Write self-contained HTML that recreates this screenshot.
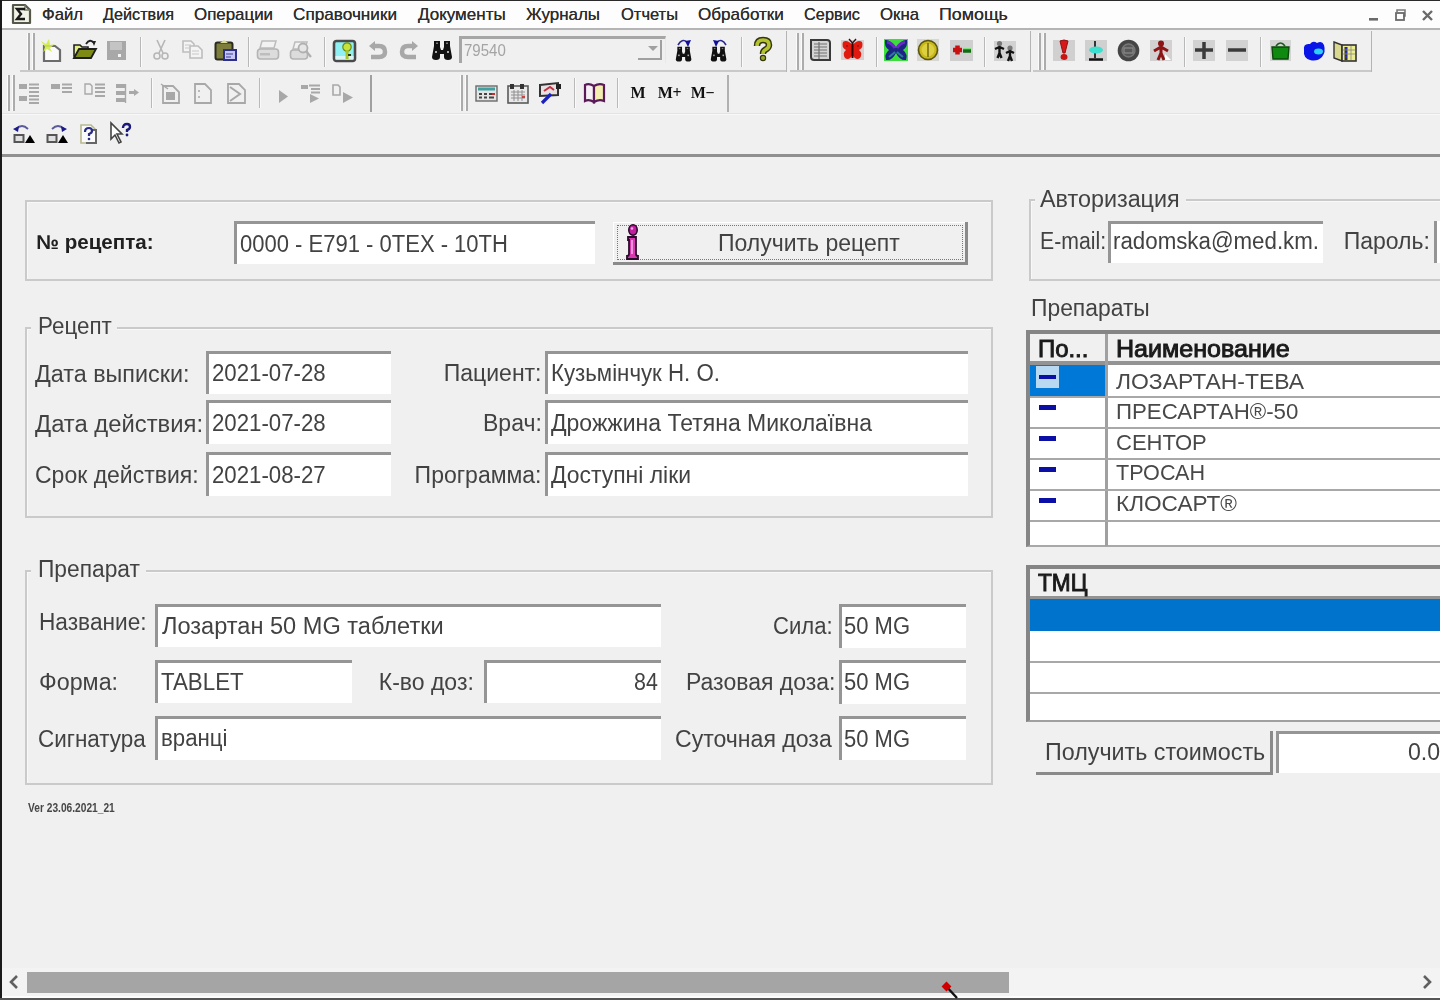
<!DOCTYPE html>
<html><head><meta charset="utf-8"><style>
*{margin:0;padding:0;box-sizing:border-box}
html,body{width:1440px;height:1000px;overflow:hidden;background:#f0f0f0;font-family:"Liberation Sans",sans-serif}
.t{position:absolute;white-space:nowrap;line-height:normal;transform-origin:0 0}
.b{position:absolute}
.inp{position:absolute;background:#fff;border-top:3px solid #959595;border-left:3px solid #959595}
.grp{position:absolute;border:2px solid #cacaca;box-shadow:inset 1px 1px 0 #f8f8f8}
svg{position:absolute;overflow:visible}
#w{position:absolute;left:0;top:0;width:1440px;height:1000px;filter:blur(0.45px)}
.mn{text-shadow:0 0 0.6px #333}
</style></head><body>
<div id="w">
<div class="b" style="left:0px;top:0px;width:1440px;height:1px;background:#2a2a2a"></div>
<div class="b" style="left:0px;top:0px;width:2px;height:1000px;background:#1a1a1a"></div>
<div class="b" style="left:2px;top:1px;width:1438px;height:27px;background:#fdfdfd"></div>
<div class="b" style="left:2px;top:28px;width:1438px;height:2px;background:#b4b4b4"></div>
<div class="t mn" style="left:42.00px;top:5.12px;font-size:17px;color:#2e2e2e;transform:scaleX(0.9820);">Файл</div>
<div class="t mn" style="left:103.00px;top:5.12px;font-size:17px;color:#2e2e2e;transform:scaleX(0.9530);">Действия</div>
<div class="t mn" style="left:194.00px;top:5.12px;font-size:17px;color:#2e2e2e;transform:scaleX(0.9937);">Операции</div>
<div class="t mn" style="left:293.00px;top:5.12px;font-size:17px;color:#2e2e2e;transform:scaleX(1.0097);">Справочники</div>
<div class="t mn" style="left:418.00px;top:5.12px;font-size:17px;color:#2e2e2e;">Документы</div>
<div class="t mn" style="left:526.00px;top:5.12px;font-size:17px;color:#2e2e2e;transform:scaleX(0.9966);">Журналы</div>
<div class="t mn" style="left:621.00px;top:5.12px;font-size:17px;color:#2e2e2e;transform:scaleX(0.9702);">Отчеты</div>
<div class="t mn" style="left:698.00px;top:5.12px;font-size:17px;color:#2e2e2e;transform:scaleX(1.0058);">Обработки</div>
<div class="t mn" style="left:804.00px;top:5.12px;font-size:17px;color:#2e2e2e;transform:scaleX(0.9614);">Сервис</div>
<div class="t mn" style="left:880.00px;top:5.12px;font-size:17px;color:#2e2e2e;transform:scaleX(0.9873);">Окна</div>
<div class="t mn" style="left:939.00px;top:5.12px;font-size:17px;color:#2e2e2e;transform:scaleX(1.0494);">Помощь</div>
<div class="b" style="left:2px;top:113px;width:1438px;height:1px;background:#e3e3e3"></div>
<div class="b" style="left:2px;top:114px;width:1438px;height:1px;background:#f8f8f8"></div>
<div class="b" style="left:2px;top:154px;width:1438px;height:3px;background:#909090"></div>
<div class="grp" style="left:25px;top:200px;width:968px;height:81px"></div>
<div class="grp" style="left:25px;top:327px;width:968px;height:191px"></div>
<div class="b" style="left:31px;top:318px;width:86px;height:14px;background:#f0f0f0"></div>
<div class="grp" style="left:25px;top:570px;width:968px;height:215px"></div>
<div class="b" style="left:31px;top:560px;width:115px;height:16px;background:#f0f0f0"></div>
<div class="grp" style="left:1029px;top:199px;width:420px;height:82px"></div>
<div class="b" style="left:1035px;top:190px;width:151px;height:15px;background:#f0f0f0"></div>
<div class="inp" style="left:234px;top:221px;width:361px;height:43px"></div>
<div class="inp" style="left:206px;top:351px;width:185px;height:43px"></div>
<div class="inp" style="left:545px;top:351px;width:423px;height:43px"></div>
<div class="inp" style="left:206px;top:400px;width:185px;height:44px"></div>
<div class="inp" style="left:545px;top:400px;width:423px;height:44px"></div>
<div class="inp" style="left:206px;top:452px;width:185px;height:44px"></div>
<div class="inp" style="left:545px;top:452px;width:423px;height:44px"></div>
<div class="inp" style="left:155px;top:604px;width:506px;height:43px"></div>
<div class="inp" style="left:155px;top:660px;width:197px;height:43px"></div>
<div class="inp" style="left:484px;top:660px;width:177px;height:43px"></div>
<div class="inp" style="left:155px;top:716px;width:506px;height:44px"></div>
<div class="inp" style="left:839px;top:604px;width:127px;height:44px"></div>
<div class="inp" style="left:839px;top:660px;width:127px;height:44px"></div>
<div class="inp" style="left:839px;top:716px;width:127px;height:44px"></div>
<div class="inp" style="left:1108px;top:221px;width:215px;height:42px"></div>
<div class="b" style="left:1434px;top:221px;width:6px;height:42px;background:#fff;border-left:3px solid #959595"></div>
<div class="inp" style="left:1276px;top:731px;width:164px;height:42px"></div>
<div class="b" style="left:613px;top:222px;width:355px;height:43px;background:#f0f0f0;border-right:3px solid #8a8a8a;border-bottom:3px solid #8a8a8a;box-shadow:inset 1px 1px 0 #fff"></div>
<div class="b" style="left:617px;top:225px;width:346px;height:35px;border:1px dotted #777"></div>
<div class="b" style="left:1036px;top:731px;width:237px;height:44px;background:#f0f0f0;border-right:3px solid #8a8a8a;border-bottom:3px solid #8a8a8a"></div>
<div class="t" style="left:36.00px;top:231.40px;font-size:20px;color:#202020;font-weight:bold;transform:scaleX(1.0284);">№ рецепта:</div>
<div class="t" style="left:239.50px;top:230.59px;font-size:23px;color:#424242;transform:scaleX(0.9571);">0000 - E791 - 0TEX - 10TH</div>
<div class="t" style="left:718.00px;top:230.19px;font-size:23px;color:#424242;">Получить рецепт</div>
<div class="t" style="left:38.00px;top:313.19px;font-size:23px;color:#424242;transform:scaleX(0.9729);">Рецепт</div>
<div class="t" style="left:35.00px;top:360.88px;font-size:23px;color:#424242;transform:scaleX(1.0148);">Дата выписки:</div>
<div class="t" style="left:35.00px;top:410.88px;font-size:23px;color:#424242;transform:scaleX(1.0354);">Дата действия:</div>
<div class="t" style="left:35.00px;top:462.19px;font-size:23px;color:#424242;">Срок действия:</div>
<div class="t" style="left:211.70px;top:360.38px;font-size:23px;color:#424242;transform:scaleX(0.9665);">2021-07-28</div>
<div class="t" style="left:211.70px;top:410.38px;font-size:23px;color:#424242;transform:scaleX(0.9665);">2021-07-28</div>
<div class="t" style="left:211.70px;top:461.99px;font-size:23px;color:#424242;transform:scaleX(0.9665);">2021-08-27</div>
<div class="t" style="left:443.75px;top:360.38px;font-size:23px;color:#424242;">Пациент:</div>
<div class="t" style="left:483.00px;top:410.38px;font-size:23px;color:#424242;">Врач:</div>
<div class="t" style="left:414.60px;top:461.99px;font-size:23px;color:#424242;">Программа:</div>
<div class="t" style="left:551.00px;top:360.44px;font-size:23px;color:#424242;transform:scaleX(0.9671);">Кузьмінчук Н. О.</div>
<div class="t" style="left:551.00px;top:410.44px;font-size:23px;color:#424242;">Дрожжина Тетяна Миколаївна</div>
<div class="t" style="left:551.00px;top:461.69px;font-size:23px;color:#424242;transform:scaleX(0.9964);">Доступні ліки</div>
<div class="t" style="left:38.00px;top:556.18px;font-size:23px;color:#424242;transform:scaleX(0.9903);">Препарат</div>
<div class="t" style="left:39.00px;top:609.18px;font-size:23px;color:#424242;transform:scaleX(0.9858);">Название:</div>
<div class="t" style="left:39.00px;top:669.18px;font-size:23px;color:#424242;transform:scaleX(1.0128);">Форма:</div>
<div class="t" style="left:38.00px;top:725.68px;font-size:23px;color:#424242;transform:scaleX(0.9752);">Сигнатура</div>
<div class="t" style="left:162.00px;top:612.93px;font-size:23px;color:#424242;transform:scaleX(1.0245);">Лозартан 50 MG таблетки</div>
<div class="t" style="left:161.00px;top:669.18px;font-size:23px;color:#424242;transform:scaleX(0.9707);">TABLET</div>
<div class="t" style="left:161.00px;top:725.43px;font-size:23px;color:#424242;transform:scaleX(0.9673);">вранці</div>
<div class="t" style="left:378.75px;top:669.18px;font-size:23px;color:#424242;">К-во доз:</div>
<div class="t" style="left:634.00px;top:669.18px;font-size:23px;color:#424242;transform:scaleX(0.9294);">84</div>
<div class="t" style="left:772.50px;top:612.68px;font-size:23px;color:#424242;transform:scaleX(0.9597);">Сила:</div>
<div class="t" style="left:686.00px;top:669.18px;font-size:23px;color:#424242;">Разовая доза:</div>
<div class="t" style="left:675.00px;top:725.68px;font-size:23px;color:#424242;transform:scaleX(1.0032);">Суточная доза</div>
<div class="t" style="left:844.00px;top:612.68px;font-size:23px;color:#424242;transform:scaleX(0.9565);">50 MG</div>
<div class="t" style="left:844.00px;top:669.18px;font-size:23px;color:#424242;transform:scaleX(0.9565);">50 MG</div>
<div class="t" style="left:844.00px;top:725.68px;font-size:23px;color:#424242;transform:scaleX(0.9565);">50 MG</div>
<div class="t" style="left:1040.40px;top:186.49px;font-size:23px;color:#424242;transform:scaleX(1.0153);">Авторизация</div>
<div class="t" style="left:1040.00px;top:228.49px;font-size:23px;color:#424242;transform:scaleX(0.9231);">E-mail:</div>
<div class="t" style="left:1113.00px;top:228.49px;font-size:23px;color:#424242;transform:scaleX(0.9694);">radomska@med.km.</div>
<div class="t" style="left:1343.70px;top:228.49px;font-size:23px;color:#424242;">Пароль:</div>
<div class="t" style="left:1031.00px;top:294.99px;font-size:23px;color:#424242;transform:scaleX(0.9941);">Препараты</div>
<div class="t" style="left:1044.80px;top:739.18px;font-size:23px;color:#424242;transform:scaleX(1.0124);">Получить стоимость</div>
<div class="t" style="left:1407.80px;top:739.18px;font-size:23px;color:#424242;transform:scaleX(1.0063);">0.0</div>
<div class="t" style="left:28.00px;top:799.94px;font-size:13px;color:#474747;font-weight:bold;transform:scaleX(0.7846);">Ver 23.06.2021_21</div>
<div class="b" style="left:1026px;top:330px;width:414px;height:217px;background:#fff;border-top:4px solid #858585;border-left:4px solid #858585;border-bottom:2px solid #a8a8a8"></div>
<div class="b" style="left:1030px;top:334px;width:410px;height:28px;background:#f0f0f0"></div>
<div class="b" style="left:1030px;top:361px;width:410px;height:4px;background:#939393"></div>
<div class="b" style="left:1105px;top:334px;width:3px;height:212px;background:#a0a0a0"></div>
<div class="b" style="left:1030px;top:396px;width:410px;height:2px;background:#a8a8a8"></div>
<div class="b" style="left:1030px;top:427px;width:410px;height:2px;background:#a8a8a8"></div>
<div class="b" style="left:1030px;top:458px;width:410px;height:2px;background:#a8a8a8"></div>
<div class="b" style="left:1030px;top:489px;width:410px;height:2px;background:#a8a8a8"></div>
<div class="b" style="left:1030px;top:520px;width:410px;height:2px;background:#a8a8a8"></div>
<div class="b" style="left:1030px;top:365px;width:75px;height:31px;background:#0078d7"></div>
<div class="b" style="left:1036px;top:366px;width:23px;height:22px;background:#b9d9f2"></div>
<div class="b" style="left:1039px;top:374.5px;width:17px;height:4.5px;background:#0b0fa6"></div>
<div class="b" style="left:1039px;top:405px;width:17px;height:4.5px;background:#0b0fa6"></div>
<div class="b" style="left:1039px;top:436px;width:17px;height:4.5px;background:#0b0fa6"></div>
<div class="b" style="left:1039px;top:467px;width:17px;height:4.5px;background:#0b0fa6"></div>
<div class="b" style="left:1039px;top:498px;width:17px;height:4.5px;background:#0b0fa6"></div>
<div class="t" style="left:1038.00px;top:335.69px;font-size:23px;color:#1a1a1a;-webkit-text-stroke:0.9px #1a1a1a;transform:scaleX(1.0392);">По...</div>
<div class="t" style="left:1116.00px;top:335.69px;font-size:23px;color:#1a1a1a;-webkit-text-stroke:0.9px #1a1a1a;transform:scaleX(1.0897);">Наименование</div>
<div class="t" style="left:1116.00px;top:368.59px;font-size:22px;color:#484848;transform:scaleX(1.0416);">ЛОЗАРТАН-ТЕВА</div>
<div class="t" style="left:1116.00px;top:399.19px;font-size:22px;color:#484848;transform:scaleX(1.0119);">ПРЕСАРТАН®-50</div>
<div class="t" style="left:1116.00px;top:429.79px;font-size:22px;color:#484848;">СЕНТОР</div>
<div class="t" style="left:1116.00px;top:460.49px;font-size:22px;color:#484848;transform:scaleX(0.9807);">ТРОСАН</div>
<div class="t" style="left:1116.00px;top:491.09px;font-size:22px;color:#484848;transform:scaleX(1.0276);">КЛОСАРТ®</div>
<div class="b" style="left:1026px;top:565px;width:414px;height:157px;background:#fff;border-top:4px solid #858585;border-left:4px solid #858585;border-bottom:2px solid #a0a0a0"></div>
<div class="b" style="left:1030px;top:569px;width:410px;height:27px;background:#f0f0f0"></div>
<div class="b" style="left:1030px;top:596px;width:410px;height:3px;background:#939393"></div>
<div class="b" style="left:1030px;top:599px;width:410px;height:32px;background:#0074cc"></div>
<div class="b" style="left:1030px;top:661px;width:410px;height:2px;background:#a8a8a8"></div>
<div class="b" style="left:1030px;top:692px;width:410px;height:2px;background:#a8a8a8"></div>
<div class="t" style="left:1037.50px;top:569.98px;font-size:23px;color:#1a1a1a;-webkit-text-stroke:0.9px #1a1a1a;transform:scaleX(0.9851);">ТМЦ</div>
<div class="b" style="left:2px;top:968px;width:1438px;height:28px;background:#f3f3f3"></div>
<div class="b" style="left:27px;top:972px;width:982px;height:21px;background:#a5a5a5"></div>
<div class="b" style="left:2px;top:996px;width:1438px;height:2px;background:#fdfdfd"></div>
<div class="b" style="left:0px;top:998px;width:1440px;height:2px;background:#555"></div>
<div class="b" style="left:20px;top:70px;width:767px;height:2px;background:#c9c9c9"></div>
<div class="b" style="left:786px;top:31px;width:1px;height:41px;background:#b4b4b4"></div>
<div class="b" style="left:790px;top:70px;width:241px;height:2px;background:#c9c9c9"></div>
<div class="b" style="left:1030px;top:31px;width:1px;height:41px;background:#b4b4b4"></div>
<div class="b" style="left:1033px;top:70px;width:339px;height:2px;background:#c9c9c9"></div>
<div class="b" style="left:1371px;top:31px;width:1px;height:41px;background:#b4b4b4"></div>
<div class="b" style="left:27px;top:33px;width:1px;height:37px;background:#fbfbfb"></div>
<div class="b" style="left:28px;top:33px;width:2px;height:37px;background:#acacac"></div>
<div class="b" style="left:32px;top:33px;width:1px;height:37px;background:#fbfbfb"></div>
<div class="b" style="left:33px;top:33px;width:2px;height:37px;background:#acacac"></div>
<div class="b" style="left:796px;top:33px;width:1px;height:37px;background:#fbfbfb"></div>
<div class="b" style="left:797px;top:33px;width:2px;height:37px;background:#acacac"></div>
<div class="b" style="left:801px;top:33px;width:1px;height:37px;background:#fbfbfb"></div>
<div class="b" style="left:802px;top:33px;width:2px;height:37px;background:#acacac"></div>
<div class="b" style="left:1038px;top:33px;width:1px;height:37px;background:#fbfbfb"></div>
<div class="b" style="left:1039px;top:33px;width:2px;height:37px;background:#acacac"></div>
<div class="b" style="left:1043px;top:33px;width:1px;height:37px;background:#fbfbfb"></div>
<div class="b" style="left:1044px;top:33px;width:2px;height:37px;background:#acacac"></div>
<div class="b" style="left:140px;top:37px;width:1px;height:30px;background:#b9b9b9"></div>
<div class="b" style="left:141px;top:37px;width:1px;height:30px;background:#fafafa"></div>
<div class="b" style="left:248px;top:37px;width:1px;height:30px;background:#b9b9b9"></div>
<div class="b" style="left:249px;top:37px;width:1px;height:30px;background:#fafafa"></div>
<div class="b" style="left:324px;top:37px;width:1px;height:30px;background:#b9b9b9"></div>
<div class="b" style="left:325px;top:37px;width:1px;height:30px;background:#fafafa"></div>
<div class="b" style="left:741px;top:37px;width:1px;height:30px;background:#b9b9b9"></div>
<div class="b" style="left:742px;top:37px;width:1px;height:30px;background:#fafafa"></div>
<div class="b" style="left:876px;top:37px;width:1px;height:30px;background:#b9b9b9"></div>
<div class="b" style="left:877px;top:37px;width:1px;height:30px;background:#fafafa"></div>
<div class="b" style="left:984px;top:37px;width:1px;height:30px;background:#b9b9b9"></div>
<div class="b" style="left:985px;top:37px;width:1px;height:30px;background:#fafafa"></div>
<div class="b" style="left:1184px;top:37px;width:1px;height:30px;background:#b9b9b9"></div>
<div class="b" style="left:1185px;top:37px;width:1px;height:30px;background:#fafafa"></div>
<div class="b" style="left:1260px;top:37px;width:1px;height:30px;background:#b9b9b9"></div>
<div class="b" style="left:1261px;top:37px;width:1px;height:30px;background:#fafafa"></div>
<div class="b" style="left:370px;top:75px;width:2px;height:37px;background:#a0a0a0"></div>
<div class="b" style="left:727px;top:75px;width:2px;height:37px;background:#b0b0b0"></div>
<div class="b" style="left:7px;top:75px;width:1px;height:36px;background:#fbfbfb"></div>
<div class="b" style="left:8px;top:75px;width:2px;height:36px;background:#acacac"></div>
<div class="b" style="left:12px;top:75px;width:1px;height:36px;background:#fbfbfb"></div>
<div class="b" style="left:13px;top:75px;width:2px;height:36px;background:#acacac"></div>
<div class="b" style="left:460px;top:75px;width:1px;height:36px;background:#fbfbfb"></div>
<div class="b" style="left:461px;top:75px;width:2px;height:36px;background:#acacac"></div>
<div class="b" style="left:465px;top:75px;width:1px;height:36px;background:#fbfbfb"></div>
<div class="b" style="left:466px;top:75px;width:2px;height:36px;background:#acacac"></div>
<div class="b" style="left:151px;top:78px;width:1px;height:30px;background:#b9b9b9"></div>
<div class="b" style="left:152px;top:78px;width:1px;height:30px;background:#fafafa"></div>
<div class="b" style="left:259px;top:78px;width:1px;height:30px;background:#b9b9b9"></div>
<div class="b" style="left:260px;top:78px;width:1px;height:30px;background:#fafafa"></div>
<div class="b" style="left:574px;top:78px;width:1px;height:30px;background:#b9b9b9"></div>
<div class="b" style="left:575px;top:78px;width:1px;height:30px;background:#fafafa"></div>
<div class="b" style="left:617px;top:78px;width:1px;height:30px;background:#b9b9b9"></div>
<div class="b" style="left:618px;top:78px;width:1px;height:30px;background:#fafafa"></div>
<div class="b" style="left:459px;top:36px;width:207px;height:27px;background:#f0f0f0;border-top:3px solid #a6a6a6;border-left:3px solid #a6a6a6;border-right:1px solid #e8e8e8"></div>
<div class="b" style="left:638px;top:40px;width:24px;height:20px;background:#f0f0f0;border-right:2px solid #a0a0a0;border-bottom:2px solid #a0a0a0"></div>
<svg style="left:648px;top:46px" width="12" height="8" viewBox="0 0 12 8"><path d="M0,0 H10 L5,5 Z" fill="#a0a0a0"/></svg>
<div class="t" style="left:463.75px;top:40.87px;font-size:17px;color:#a4a4a4;transform:scaleX(0.8836);">79540</div>
<svg style="left:40px;top:38px" width="24" height="24" viewBox="0 0 24 24"><path d="M4,8 H15 L20,12 V23 H4 Z" fill="#fafafa" stroke="#6c6c6c" stroke-width="2.2"/><path d="M1,3 L6,6 L9,1 L10,7 L15,6 L10,10 L12,14 L7,11 L3,14 L5,9 Z" fill="#d2ea48" opacity="0.9"/></svg>
<svg style="left:73px;top:38px" width="24" height="22" viewBox="0 0 24 22"><path d="M1,7 H7 L9,9 H15 V18 H1 Z" fill="#e4f080" stroke="#222" stroke-width="1.6"/><path d="M1,20 L6,11 H23 L18,20 Z" fill="#7d8b14" stroke="#1e1e1e" stroke-width="1.8"/><path d="M13,6 Q17,0 21,5" fill="none" stroke="#222" stroke-width="1.8"/><path d="M19,3 L23,3 L21,8 Z" fill="#222"/></svg>
<svg style="left:106px;top:40px" width="22" height="22" viewBox="0 0 22 22"><rect x="1" y="1" width="19" height="19" fill="#a8a8a8"/><rect x="4" y="2" width="12" height="8" fill="#c4c4c4"/><rect x="12" y="14" width="3" height="3" fill="#f4f4f4"/></svg>
<svg style="left:152px;top:39px" width="18" height="22" viewBox="0 0 18 22"><path d="M5,1 L11,14 M13,1 L7,14" stroke="#b6b6b6" stroke-width="1.6" fill="none"/><circle cx="5" cy="17" r="3" fill="none" stroke="#b6b6b6" stroke-width="1.6"/><circle cx="13" cy="17" r="3" fill="none" stroke="#b6b6b6" stroke-width="1.6"/></svg>
<svg style="left:181px;top:39px" width="24" height="21" viewBox="0 0 24 21"><path d="M2,2 H10 L13,5 V13 H2 Z" fill="#f4f4f4" stroke="#bdbdbd" stroke-width="1.6"/><path d="M9,7 H17 L21,11 V19 H9 Z" fill="#f4f4f4" stroke="#bdbdbd" stroke-width="1.6"/><path d="M4,6 H10 M4,9 H10 M11,12 H18 M11,15 H18" stroke="#c8c8c8" stroke-width="1"/></svg>
<svg style="left:214px;top:39px" width="24" height="23" viewBox="0 0 24 23"><rect x="1.5" y="3.5" width="17" height="17" rx="2" fill="#7d7d3c" stroke="#2a2a20" stroke-width="2"/><path d="M6,4 L10,1 L14,4 Z" fill="#dede9a"/><rect x="10" y="11" width="12" height="10" fill="#c6c6f2" stroke="#2e2e8c" stroke-width="2"/><path d="M12,15 H19 M12,18 H17" stroke="#3a3a9a" stroke-width="1.2"/></svg>
<svg style="left:256px;top:39px" width="25" height="23" viewBox="0 0 25 23"><path d="M6,2 H20 L18,9 H4 Z" fill="#f2f2f2" stroke="#bcbcbc" stroke-width="1.5"/><rect x="1.5" y="10" width="21" height="10" rx="3" fill="#dcdcdc" stroke="#b4b4b4" stroke-width="1.6"/><rect x="4" y="14" width="10" height="2.5" fill="#bdbdbd"/></svg>
<svg style="left:289px;top:39px" width="25" height="23" viewBox="0 0 25 23"><path d="M6,3 H18 L16,10 H4 Z" fill="#f2f2f2" stroke="#bcbcbc" stroke-width="1.5"/><rect x="1.5" y="11" width="17" height="9" rx="3" fill="#dcdcdc" stroke="#b4b4b4" stroke-width="1.6"/><circle cx="14" cy="9" r="4.5" fill="#e6e6e6" stroke="#b0b0b0" stroke-width="1.8"/><path d="M17,12 L22,18" stroke="#b0b0b0" stroke-width="2.2"/></svg>
<svg style="left:332px;top:39px" width="26" height="24" viewBox="0 0 26 24"><rect x="2" y="2" width="21" height="20" rx="2.5" fill="#8ef0f2" stroke="#4a4a4a" stroke-width="2.6"/><rect x="3.5" y="17" width="18" height="3.5" fill="#d8f4f4"/><circle cx="15" cy="8" r="4.2" fill="#c8e23c" stroke="#6a8a10" stroke-width="1.2"/><rect x="13.6" y="11" width="3" height="9" fill="#a8c42a"/><rect x="16" y="15" width="3" height="2" fill="#2a3a10"/></svg>
<svg style="left:368px;top:41px" width="20" height="19" viewBox="0 0 20 19"><path d="M5,5 H11 Q17,5 17,11 Q17,16 11,16 H3" fill="none" stroke="#a8a8a8" stroke-width="4.5"/><path d="M1,5 L7,0 V10 Z" fill="#a8a8a8"/></svg>
<svg style="left:399px;top:41px" width="20" height="19" viewBox="0 0 20 19"><path d="M15,5 H9 Q3,5 3,11 Q3,16 9,16 H17" fill="none" stroke="#a8a8a8" stroke-width="4.5"/><path d="M19,5 L13,0 V10 Z" fill="#a8a8a8"/></svg>
<svg style="left:431px;top:40px" width="23" height="22" viewBox="0 0 23 22"><g transform="translate(0,0)"><path d="M1,17 L3,6 V1 H9 V7 L10,10 H12 L13,7 V1 H19 V6 L21,17 Q21,20 17,20 Q13,20 13,17 V14 H9 V17 Q9,20 5,20 Q1,20 1,17 Z" fill="#111"/><rect x="4" y="11" width="2" height="2" fill="#aaa"/><rect x="16" y="11" width="2" height="2" fill="#aaa"/><rect x="5" y="2.5" width="2" height="1.5" fill="#777"/><rect x="15" y="2.5" width="2" height="1.5" fill="#777"/></g></svg>
<svg style="left:674px;top:38px" width="22" height="24" viewBox="0 0 22 24"><g transform="translate(1,8) scale(0.78)"><g transform="translate(0,0)"><path d="M1,17 L3,6 V1 H9 V7 L10,10 H12 L13,7 V1 H19 V6 L21,17 Q21,20 17,20 Q13,20 13,17 V14 H9 V17 Q9,20 5,20 Q1,20 1,17 Z" fill="#111"/><rect x="4" y="11" width="2" height="2" fill="#aaa"/><rect x="16" y="11" width="2" height="2" fill="#aaa"/><rect x="5" y="2.5" width="2" height="1.5" fill="#777"/><rect x="15" y="2.5" width="2" height="1.5" fill="#777"/></g></g><path d="M4,7 Q8,0 13,4" fill="none" stroke="#2a2a90" stroke-width="1.6"/><path d="M11,3 L17,2 L14,9 Z" fill="#10109a"/></svg>
<svg style="left:708px;top:38px" width="22" height="24" viewBox="0 0 22 24"><g transform="translate(2,8) scale(0.78)"><g transform="translate(0,0)"><path d="M1,17 L3,6 V1 H9 V7 L10,10 H12 L13,7 V1 H19 V6 L21,17 Q21,20 17,20 Q13,20 13,17 V14 H9 V17 Q9,20 5,20 Q1,20 1,17 Z" fill="#111"/><rect x="4" y="11" width="2" height="2" fill="#aaa"/><rect x="16" y="11" width="2" height="2" fill="#aaa"/><rect x="5" y="2.5" width="2" height="1.5" fill="#777"/><rect x="15" y="2.5" width="2" height="1.5" fill="#777"/></g></g><path d="M18,7 Q14,0 9,4" fill="none" stroke="#2a2a90" stroke-width="1.6"/><path d="M11,3 L5,2 L8,9 Z" fill="#10109a"/></svg>
<svg style="left:754px;top:39px" width="17" height="22" viewBox="0 0 17 22"><path d="M3,7 Q3,1 9,1 Q15,1 15,6 Q15,9 11,11 Q9,12 9,15" fill="none" stroke="#36360e" stroke-width="6.5"/><path d="M3,7 Q3,1 9,1 Q15,1 15,6 Q15,9 11,11 Q9,12 9,15" fill="none" stroke="#b4c430" stroke-width="3.6"/><circle cx="9" cy="19" r="2.6" fill="#9aa82a" stroke="#36360e" stroke-width="1.2"/></svg>
<svg style="left:809px;top:39px" width="23" height="23" viewBox="0 0 23 23"><path d="M2,1 H18 Q21,1 21,4 V21 H5 Q2,21 2,18 Z" fill="#d4d4d4" stroke="#3a3a3a" stroke-width="2"/><path d="M5,5 H18 M5,8 H18 M5,11 H18 M5,14 H18 M5,17 H18 M10,3 V20" stroke="#707070" stroke-width="1.2"/></svg>
<svg style="left:841px;top:39px" width="24" height="22" viewBox="0 0 24 22"><rect x="0" y="1" width="23" height="20" fill="#d8d0d0"/><path d="M11.5,6 Q6,0 2,3 Q0,8 5,11 Q1,14 4,19 Q8,22 11.5,16 Q15,22 19,19 Q22,14 18,11 Q23,8 21,3 Q17,0 11.5,6 Z" fill="#e01a0e"/><path d="M11.5,4 V19" stroke="#3a0a0a" stroke-width="2"/><path d="M8,0 L11.5,4 L15,0" stroke="#301010" stroke-width="1.4" fill="none"/><circle cx="6" cy="7" r="1" fill="#a01010"/><circle cx="17" cy="7" r="1" fill="#a01010"/></svg>
<svg style="left:884px;top:39px" width="25" height="23" viewBox="0 0 25 23"><rect x="0" y="0" width="24" height="22" fill="#3cde3c"/><path d="M12,9 Q6,0 1,1 Q0,8 5,11 Q0,15 2,21 Q8,22 12,14 Q16,22 22,21 Q24,15 19,11 Q24,8 23,1 Q18,0 12,9 Z" fill="#1c2484"/><path d="M3,3 Q8,4 11,9 M21,3 Q16,4 13,9" stroke="#6a28c8" stroke-width="3" fill="none"/><path d="M5,18 Q9,15 11,13 M19,18 Q15,15 13,13" stroke="#2a7a9a" stroke-width="2" fill="none"/></svg>
<svg style="left:917px;top:39px" width="23" height="23" viewBox="0 0 23 23"><rect x="0" y="0" width="22" height="22" fill="#d6d6d2"/><circle cx="11" cy="11" r="9.5" fill="#c8b818" stroke="#5a5410" stroke-width="1.6"/><circle cx="11" cy="11" r="6.5" fill="#dcd040"/><path d="M11,4 V18" stroke="#6a6010" stroke-width="1.4"/></svg>
<svg style="left:950px;top:40px" width="24" height="21" viewBox="0 0 24 21"><rect x="0" y="0" width="23" height="21" fill="#cfcfcf"/><path d="M3,10 H12 M7.5,5.5 V14.5" stroke="#c81010" stroke-width="4.5"/><path d="M13,11 H21" stroke="#106a10" stroke-width="3.5"/><path d="M13,8.5 H21" stroke="#80e080" stroke-width="1"/></svg>
<svg style="left:993px;top:40px" width="24" height="22" viewBox="0 0 24 22"><rect x="1" y="1" width="22" height="20" fill="#d2d2d2"/><circle cx="6.5" cy="3.5" r="2.6" fill="#777"/><path d="M6.5,6 V13 M2,9 L6.5,7 L11,9 M4.5,18 L6.5,13 L8.5,18" stroke="#111" stroke-width="2.4" fill="none"/><circle cx="17" cy="8" r="2.6" fill="#777"/><path d="M17,10.5 V16 M13,13 L17,11 L21,13 M15,21 L17,16 L19,21" stroke="#111" stroke-width="2.4" fill="none"/></svg>
<svg style="left:1053px;top:39px" width="23" height="23" viewBox="0 0 23 23"><rect x="0" y="1" width="22" height="21" fill="#d0d0d0"/><path d="M7,2 Q11,0 15,2 L12,14 H10 Z" fill="#d81818" stroke="#901010" stroke-width="1"/><ellipse cx="11" cy="18" rx="3.5" ry="3" fill="#c81414"/></svg>
<svg style="left:1085px;top:39px" width="23" height="23" viewBox="0 0 23 23"><rect x="0" y="1" width="22" height="21" fill="#d0d0d0"/><path d="M10,2 V19" stroke="#333" stroke-width="2"/><ellipse cx="11" cy="11" rx="7" ry="3.5" fill="#3ce0d0"/><path d="M4,20.5 H18" stroke="#111" stroke-width="2.5"/></svg>
<svg style="left:1117px;top:39px" width="24" height="23" viewBox="0 0 24 23"><circle cx="11.5" cy="11.5" r="10.8" fill="#454545"/><circle cx="11.5" cy="11.5" r="6.5" fill="#585858" stroke="#777" stroke-width="1.4"/><rect x="7" y="9" width="9" height="5" fill="none" stroke="#8a8a8a" stroke-width="1.2"/></svg>
<svg style="left:1150px;top:39px" width="23" height="23" viewBox="0 0 23 23"><rect x="0" y="1" width="22" height="21" fill="#d2d0d0"/><circle cx="11" cy="4.5" r="3" fill="#8c1414"/><path d="M11,7 V14 M4,12 L11,8 L18,12 M8,21 L11,14 L14,21" stroke="#8c1414" stroke-width="3" fill="none"/><path d="M15,15 L21,21 H15 Z" fill="#fff"/></svg>
<svg style="left:1193px;top:40px" width="23" height="21" viewBox="0 0 23 21"><rect x="0" y="0" width="22" height="21" fill="#d2d2d2"/><path d="M2,10 H20 M11,2 V19" stroke="#3a3a3a" stroke-width="3.5"/></svg>
<svg style="left:1226px;top:40px" width="23" height="21" viewBox="0 0 23 21"><rect x="0" y="0" width="22" height="21" fill="#d2d2d2"/><path d="M2,10 H20" stroke="#3a3a3a" stroke-width="3.5"/></svg>
<svg style="left:1270px;top:40px" width="22" height="21" viewBox="0 0 22 21"><rect x="0" y="0" width="21" height="21" fill="#d4d4d4"/><path d="M6,6 Q10.5,0 15,6" fill="none" stroke="#1a5a1a" stroke-width="1.6"/><path d="M2,7 H19 L18,19 H3 Z" fill="#0e8a10" stroke="#0a4a0a" stroke-width="1.4"/></svg>
<svg style="left:1302px;top:40px" width="24" height="22" viewBox="0 0 24 22"><path d="M2,10 Q1,3 8,4 Q11,0 15,3 Q20,0 22,5 Q24,12 20,17 Q15,22 8,20 Q1,18 2,10 Z" fill="#0a14e6"/><ellipse cx="16.5" cy="11.5" rx="4.5" ry="3" fill="#2ad0f8"/></svg>
<svg style="left:1333px;top:40px" width="25" height="22" viewBox="0 0 25 22"><path d="M1,2 L9,5 V21 L1,18 Z" fill="#d8d890" stroke="#333" stroke-width="1.4"/><rect x="9" y="5" width="14" height="16" fill="#ecec90" stroke="#333" stroke-width="1.6"/><path d="M13,7 V20" stroke="#333" stroke-width="3"/><path d="M12,9 H14 M12,13 H14 M12,17 H14" stroke="#2a2ad0" stroke-width="2"/><path d="M18,6 V20 M10,10 H22 M10,14 H22" stroke="#888" stroke-width="0.8"/></svg>
<svg style="left:19px;top:83px" width="21" height="21" viewBox="0 0 21 21"><rect x="0" y="1" width="8" height="5" fill="#a8a8a8"/><rect x="0" y="13" width="8" height="5" fill="#a8a8a8"/><path d="M10,1.5 H20 M10,5 H20 M10,9 H20 M10,13 H20 M10,16.5 H20 M10,20 H20" stroke="#a8a8a8" stroke-width="2"/></svg>
<svg style="left:51px;top:83px" width="22" height="13" viewBox="0 0 22 13"><rect x="0" y="1" width="9" height="5" fill="#a8a8a8"/><path d="M11,1.5 H21 M11,5 H21 M11,9 H21" stroke="#a8a8a8" stroke-width="2"/></svg>
<svg style="left:84px;top:83px" width="22" height="17" viewBox="0 0 22 17"><path d="M1,1 H6 L8,3 V11 H1 Z" fill="none" stroke="#a8a8a8" stroke-width="1.4"/><path d="M11,1.5 H21 M11,5 H21 M11,9 H21 M11,13 H21" stroke="#a8a8a8" stroke-width="2"/></svg>
<svg style="left:116px;top:83px" width="23" height="21" viewBox="0 0 23 21"><rect x="0" y="1" width="9" height="4" fill="#a8a8a8"/><rect x="0" y="8" width="9" height="4" fill="#a8a8a8"/><rect x="0" y="15" width="9" height="4" fill="#a8a8a8"/><path d="M9.5,1 V20" stroke="#a8a8a8" stroke-width="1.4"/><path d="M13,9.5 H19" stroke="#a8a8a8" stroke-width="3"/><path d="M18,6 L23,9.5 L18,13 Z" fill="#a8a8a8"/></svg>
<svg style="left:160px;top:83px" width="23" height="21" viewBox="0 0 23 21"><path d="M3,3 H13 L19,9 V20 H3 Z" fill="none" stroke="#a8a8a8" stroke-width="1.8"/><rect x="6" y="9" width="9" height="8" fill="#a8a8a8"/><path d="M1,1 L8,6" stroke="#a8a8a8" stroke-width="1.5"/></svg>
<svg style="left:194px;top:83px" width="19" height="21" viewBox="0 0 19 21"><path d="M1,1 H11 L17,7 V20 H1 Z" fill="none" stroke="#a8a8a8" stroke-width="1.8"/><circle cx="5" cy="8" r="1" fill="#a8a8a8"/><circle cx="5" cy="14" r="1" fill="#a8a8a8"/></svg>
<svg style="left:227px;top:83px" width="20" height="21" viewBox="0 0 20 21"><path d="M1,1 H12 L18,7 V20 H1 Z" fill="none" stroke="#a8a8a8" stroke-width="1.8"/><path d="M3,4 L13,11 L3,18" stroke="#a8a8a8" stroke-width="2" fill="none"/></svg>
<svg style="left:279px;top:90px" width="10" height="14" viewBox="0 0 10 14"><path d="M0,0 L9,6.5 L0,13 Z" fill="#a8a8a8"/></svg>
<svg style="left:300px;top:84px" width="21" height="20" viewBox="0 0 21 20"><rect x="1" y="1" width="7" height="4" fill="#a8a8a8"/><path d="M9,1.5 H20 M11,5 H20 M11,8.5 H20" stroke="#a8a8a8" stroke-width="2"/><path d="M10,10 L19,14.5 L10,19 Z" fill="#a8a8a8"/></svg>
<svg style="left:332px;top:84px" width="22" height="20" viewBox="0 0 22 20"><path d="M1,1 H6 L8,3 V11 H1 Z" fill="none" stroke="#a8a8a8" stroke-width="1.6"/><path d="M11,8 L21,13.5 L11,19 Z" fill="#a8a8a8"/></svg>
<svg style="left:475px;top:85px" width="23" height="17" viewBox="0 0 23 17"><rect x="1" y="1" width="21" height="15" fill="#e4e4e4" stroke="#6a6a6a" stroke-width="1.4"/><rect x="3" y="2.5" width="17" height="3" fill="#40a0a0"/><path d="M4,9 H7 M9,9 H12 M14,9 H17 M4,12.5 H7 M9,12.5 H12 M14,12.5 H19" stroke="#444" stroke-width="2"/><rect x="17" y="8" width="3" height="2" fill="#c03030"/></svg>
<svg style="left:507px;top:83px" width="23" height="21" viewBox="0 0 23 21"><rect x="1" y="3" width="20" height="17" fill="#e8e8e8" stroke="#5a5a5a" stroke-width="1.6"/><rect x="3" y="1" width="4" height="5" fill="#333"/><rect x="13" y="1" width="4" height="5" fill="#333"/><path d="M4,9 H18 M4,12 H18 M4,15 H18 M7,7 V18 M11,7 V18 M15,7 V18" stroke="#909090" stroke-width="1"/><rect x="15" y="13" width="3" height="2" fill="#d04040"/></svg>
<svg style="left:538px;top:82px" width="24" height="22" viewBox="0 0 24 22"><path d="M2,3 L20,1 V13 L2,14 Z" fill="#e8e0e0" stroke="#333" stroke-width="2"/><path d="M6,9 L12,5 L16,8" stroke="#c03040" stroke-width="2" fill="none"/><path d="M4,21 L13,12" stroke="#1a20c0" stroke-width="3.2"/><rect x="18" y="2" width="5" height="5" fill="#222"/></svg>
<svg style="left:583px;top:82px" width="23" height="22" viewBox="0 0 23 22"><path d="M2,3 Q6,1 11,4 V20 Q6,17 2,19 Z" fill="#f4f0f4" stroke="#5a1a5a" stroke-width="2.2"/><path d="M11,4 Q16,1 21,3 V19 Q16,17 11,20 Z" fill="#f2eeb0" stroke="#5a1a5a" stroke-width="2.2"/></svg>
<div class="t" style="left:630.5px;top:84px;font-family:'Liberation Serif',serif;font-weight:bold;font-size:16px;color:#111;width:17.700000000000045px;letter-spacing:-0.5px">M</div>
<div class="t" style="left:657.8px;top:84px;font-family:'Liberation Serif',serif;font-weight:bold;font-size:16px;color:#111;width:27.300000000000068px;letter-spacing:-0.5px">M+</div>
<div class="t" style="left:690.8px;top:84px;font-family:'Liberation Serif',serif;font-weight:bold;font-size:16px;color:#111;width:26.40000000000009px;letter-spacing:-0.5px">M−</div>
<svg style="left:13px;top:124px" width="23" height="20" viewBox="0 0 23 20"><path d="M3,5 Q9,-1 15,5" fill="none" stroke="#5a5a9a" stroke-width="1.8"/><path d="M0,5 L6,2 L5,8 Z" fill="#1a1a8a"/><rect x="1.5" y="11" width="9" height="7" fill="#e0e0e0" stroke="#555" stroke-width="2"/><path d="M12,19 L17,11 L22,19 Z" fill="#000"/></svg>
<svg style="left:46px;top:124px" width="23" height="20" viewBox="0 0 23 20"><path d="M6,5 Q12,-1 18,5" fill="none" stroke="#5a5a9a" stroke-width="1.8"/><path d="M21,5 L15,2 L16,8 Z" fill="#1a1a8a"/><rect x="1.5" y="11" width="9" height="7" fill="#e0e0e0" stroke="#555" stroke-width="2"/><path d="M12,19 L17,11 L22,19 Z" fill="#000"/></svg>
<svg style="left:80px;top:124px" width="18" height="21" viewBox="0 0 18 21"><path d="M1,1 H11 L16,6 V19 H1 Z" fill="#fafafa" stroke="#b8b890" stroke-width="1.6"/><path d="M11,6 H16 V19 H6" fill="none" stroke="#666" stroke-width="2"/><path d="M5,8 Q5,4 9,4 Q12,4 12,7 Q12,9 9,10 V12" fill="none" stroke="#2a2a8a" stroke-width="2.2"/><circle cx="9" cy="15" r="1.3" fill="#2a2a8a"/></svg>
<svg style="left:110px;top:122px" width="22" height="23" viewBox="0 0 22 23"><path d="M1,1 L1,17 L5,13 L9,21 L11,20 L7,12 L12,12 Z" fill="#fff" stroke="#444" stroke-width="1.6"/><path d="M13,6 Q13,2 17,2 Q20,2 20,5 Q20,7 17,8 V10" fill="none" stroke="#1a1a7a" stroke-width="2.4"/><circle cx="17" cy="13" r="1.4" fill="#1a1a7a"/></svg>
<svg style="left:1366px;top:8px" width="70" height="16" viewBox="0 0 70 16"><rect x="3" y="10" width="9" height="2.6" fill="#6a6a6a"/><path d="M31,4 V2 H39 V8 H37" fill="none" stroke="#7a7a7a" stroke-width="1.6"/><rect x="30" y="5" width="8" height="7" fill="none" stroke="#6a6a6a" stroke-width="1.8"/><path d="M57,3 L66,12 M66,3 L57,12" stroke="#6a6a6a" stroke-width="2.4"/></svg>
<svg style="left:622px;top:222px" width="22" height="40" viewBox="0 0 22 40"><ellipse cx="11" cy="8" rx="4.2" ry="5.2" fill="#c020a0" stroke="#2a0a2a" stroke-width="1.6"/><path d="M6,15 H14 V32 Q14,34 16,34 V37 H5 V34 Q7,34 7,32 V18 H6 Z" fill="#d838b0" stroke="#2a0a2a" stroke-width="1.8"/><path d="M10,18 V32" stroke="#f8a8e8" stroke-width="1.6"/><circle cx="10" cy="6.5" r="1.3" fill="#f8a8e8"/></svg>
<svg style="left:8px;top:975px" width="12" height="14" viewBox="0 0 12 14"><path d="M9,1 L3,7 L9,13" fill="none" stroke="#606060" stroke-width="2.6"/></svg>
<svg style="left:1421px;top:975px" width="12" height="14" viewBox="0 0 12 14"><path d="M3,1 L9,7 L3,13" fill="none" stroke="#606060" stroke-width="2.6"/></svg>
<svg style="left:11px;top:3px" width="21" height="22" viewBox="0 0 21 22"><path d="M2,2 H14 L19,7 V20 H2 Z" fill="#f2f2e6" stroke="#55574a" stroke-width="2.2" stroke-linejoin="round"/><path d="M14,2 V7 H19" fill="none" stroke="#77796a" stroke-width="1.4"/><path d="M14,6 H6 L10,11 L6,16 H14" fill="none" stroke="#1a1a1a" stroke-width="2.4"/></svg>
<svg style="left:942px;top:982px" width="20" height="18" viewBox="0 0 20 18"><path d="M3,3 L15,16" stroke="#111" stroke-width="2.4"/><rect x="1" y="1" width="7" height="7" transform="rotate(45 4.5 4.5)" fill="#c00"/></svg>
</div>
</body></html>
